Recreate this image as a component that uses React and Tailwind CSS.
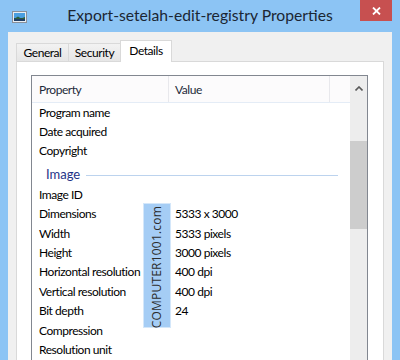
export default function App() {
  const top = ["Program name", "Date acquired", "Copyright"];
  const img = [
    ["Image ID", ""],
    ["Dimensions", "5333 x 3000"],
    ["Width", "5333 pixels"],
    ["Height", "3000 pixels"],
    ["Horizontal resolution", "400 dpi"],
    ["Vertical resolution", "400 dpi"],
    ["Bit depth", "24"],
    ["Compression", ""],
    ["Resolution unit", ""],
  ];
  const Row = ({ k, v }) => (
    <div className="flex h-[19.4px] items-center text-[12px] tracking-[-0.45px] text-[#000]">
      <div className="w-[143px] shrink-0 pl-[7px] whitespace-nowrap">{k}</div>
      <div className="whitespace-nowrap">{v}</div>
    </div>
  );
  return (
    <div className="relative flex h-[360px] w-[400px] flex-col overflow-hidden bg-[#8cc4f4] font-['Lato',sans-serif]">
      {/* Title bar */}
      <div className="grid h-[32px] shrink-0 grid-cols-[1fr_auto_1fr]">
        <div className="flex items-center pl-[12px] pt-[1px]">
          <svg width="15" height="12" viewBox="0 0 15 12">
            <rect x="0.5" y="0.5" width="14" height="11" fill="#e8eef4" stroke="#8a9099" />
            <rect x="2" y="2" width="11" height="5" fill="#4a9fe0" />
            <rect x="2" y="7" width="11" height="3" fill="#1f3f66" />
            <path d="M2 8 L6 5.5 L9 7.5 L13 6 L13 8 Z" fill="#2f5f3a" />
          </svg>
        </div>
        <div className="flex items-center text-[15.7px] text-[#1b2633] whitespace-nowrap">
          Export-setelah-edit-registry Properties
        </div>
        <div className="flex justify-end pr-[8px]">
          <div className="flex h-[21px] w-[32px] items-center justify-center bg-[#c75050]">
            <svg width="9" height="8" viewBox="0 0 9 8">
              <path d="M1 0.5 L8 7.5 M8 0.5 L1 7.5" stroke="#fff" strokeWidth="1.8" />
            </svg>
          </div>
        </div>
      </div>

      {/* Client */}
      <div className="mx-[8px] flex flex-1 flex-col bg-[#f0f0f0] px-[8px] pt-[8px]">
        {/* tabs */}
        <div className="relative z-10 flex h-[21px] items-end text-[12px] tracking-[-0.45px] text-[#000]">
          <div className="flex h-[18px] w-[53px] items-center justify-center border-l border-r border-t border-[#d9d9d9] bg-gradient-to-b from-[#f2f2f2] to-[#e6e6e6]">
            General
          </div>
          <div className="flex h-[18px] w-[52px] items-center justify-center border-r border-t border-[#d9d9d9] bg-gradient-to-b from-[#f2f2f2] to-[#e6e6e6]">
            Security
          </div>
          <div className="-mb-[1px] -ml-[1px] flex h-[22px] w-[52px] items-center justify-center border-l border-r border-t border-[#d9d9d9] bg-white pb-[1px]">
            Details
          </div>
        </div>
        {/* panel */}
        <div className="flex flex-1 flex-col border border-[#d9d9d9] bg-white pl-[14px] pr-[15px] pt-[13px]">
          <div className="flex flex-1 border border-[#828790] bg-white">
            <div className="flex flex-1 flex-col">
              {/* header */}
              <div className="flex h-[27px] shrink-0 items-center border-b border-[#e4ecf6] bg-[#fcfbfc] text-[12px] tracking-[-0.45px] text-[#1e2a3a]">
                <div className="flex h-full w-[137px] items-center border-r border-[#e8e8ec] pl-[7px] pt-[2px]">Property</div>
                <div className="flex h-full w-[161px] items-center border-r border-[#e8e8ec] pl-[6px] pt-[2px]">Value</div>
              </div>
              {top.map((t) => (
                <Row key={t} k={t} v="" />
              ))}
              <div className="flex h-[24px] items-center pl-[14px] pr-[12px] pt-[4px]">
                <span className="text-[13px] text-[#1e3287]">Image</span>
                <div className="ml-[6px] h-px flex-1 bg-[#bcd3ee]" />
              </div>
              {img.map(([k, v]) => (
                <Row key={k} k={k} v={v} />
              ))}
            </div>
            {/* scrollbar */}
            <div className="flex w-[17px] shrink-0 flex-col bg-[#ededed]">
              <div className="flex h-[24px] items-center justify-center">
                <svg width="8" height="5" viewBox="0 0 8 5">
                  <path d="M0.5 4.5 L4 1 L7.5 4.5" fill="none" stroke="#5a5a5a" strokeWidth="1.6" />
                </svg>
              </div>
              <div className="mt-[41px] h-[88px] bg-[#cdcdcd]" />
            </div>
          </div>
        </div>
      </div>

      {/* watermark */}
      <div className="absolute left-[143px] top-[203px] flex h-[125px] w-[28px] items-center justify-center border border-[#d4e7fa] bg-[#a5cdf5] pt-[3px]">
        <span className="rotate-180 text-[12px] tracking-[0.2px] text-[#2c2c2c] [writing-mode:vertical-rl] font-['Open_Sans',sans-serif]">
          COMPUTER1001.com
        </span>
      </div>
    </div>
  );
}
